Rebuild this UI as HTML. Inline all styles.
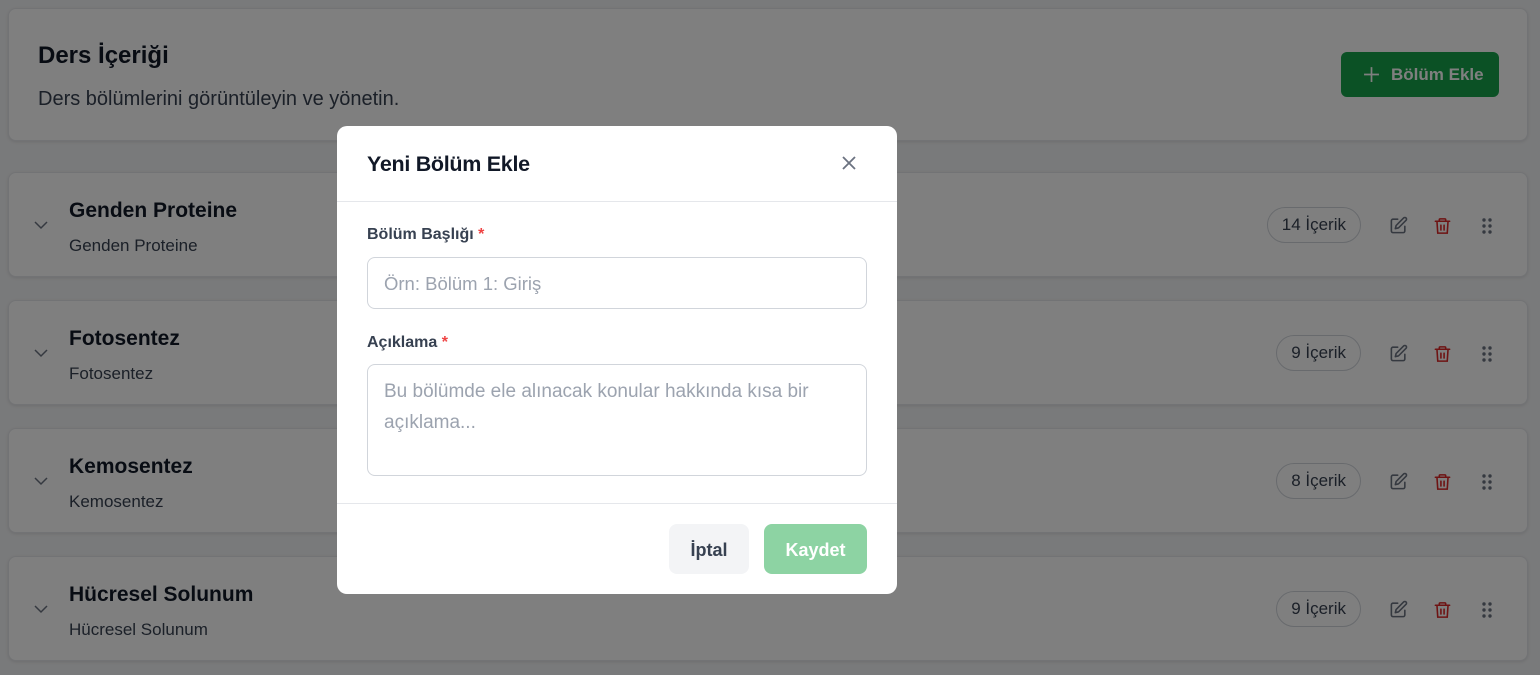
<!DOCTYPE html>
<html><head><meta charset="utf-8"><style>
*{box-sizing:border-box;margin:0;padding:0}
body{width:1540px;height:675px;overflow:hidden;background:#f3f4f6;font-family:"Liberation Sans",sans-serif;position:relative}
.card{position:absolute;left:8px;width:1520px;background:#fff;border:1px solid #e5e7eb;border-radius:8px;box-shadow:0 1px 3px rgba(0,0,0,.1)}
.abs{position:absolute}
.sec h3{position:absolute;left:60px;top:26px;font-size:21px;font-weight:bold;color:#111827}
.sec p{position:absolute;left:60px;top:63px;font-size:17px;color:#374151}
.chev{position:absolute;left:24px;top:44px}
.pill{position:absolute;right:166px;top:34px;height:36px;border:1px solid #d1d5db;border-radius:18px;font-size:17px;color:#374151;line-height:34px;padding:0 14px}
.ic{position:absolute;top:43px}
.ov{position:absolute;inset:0;background:rgba(0,0,0,.5)}
.modal{position:absolute;left:337px;top:126px;width:560px;height:468px;background:#fff;border-radius:10px}
.lbl{position:absolute;left:30px;font-size:16px;font-weight:bold;color:#374151}
.lbl span{color:#ef4444}
.inp{position:absolute;left:30px;width:500px;border:1px solid #d1d5db;border-radius:8px;color:#9ca3af;font-size:18.5px;padding-left:16px}
</style></head><body>
<div class="card" style="top:8px;height:133px">
 <div class="abs" style="left:29px;top:33px;font-size:24px;font-weight:bold;color:#111827">Ders İçeriği</div>
 <div class="abs" style="left:29px;top:79px;font-size:20px;color:#374151">Ders bölümlerini görüntüleyin ve yönetin.</div>
 <div class="abs" style="left:1332px;top:43px;width:158px;height:45px;background:#16a34a;border-radius:6px;color:#fff;font-size:17px;font-weight:bold;line-height:45px;padding-left:50px">Bölüm Ekle
  <svg class="abs" style="left:22px;top:14px" width="17" height="17" viewBox="0 0 16 16" stroke="#fff" stroke-width="1.6"><path d="M8 1v14M1 8h14"/></svg></div>
</div>
<div id="cards"></div>
<script>
var d=[["Genden Proteine",172,"14 İçerik"],["Fotosentez",300,"9 İçerik"],["Kemosentez",428,"8 İçerik"],["Hücresel Solunum",556,"9 İçerik"]],h="";
d.forEach(function(c){h+='<div class="card sec" style="top:'+c[1]+'px;height:105px"><svg class="chev" width="16" height="16" viewBox="0 0 16 16" fill="none" stroke="#6b7280" stroke-width="1.5"><path d="M2 5l6 6 6-6"/></svg><h3>'+c[0]+'</h3><p>'+c[0]+'</p><div class="pill">'+c[2]+'</div>'+
'<svg class="ic" style="left:1380px" width="19" height="19" viewBox="0 0 24 24" fill="none" stroke="#6b7280" stroke-width="2" stroke-linecap="round" stroke-linejoin="round"><path d="M11 4H5a2 2 0 0 0-2 2v13a2 2 0 0 0 2 2h13a2 2 0 0 0 2-2v-6"/><path d="M18.5 2.5a2.1 2.1 0 0 1 3 3L12 15l-4 1 1-4z"/></svg>'+
'<svg class="ic" style="left:1424px" width="19" height="20" viewBox="0 0 24 24" fill="none" stroke="#dc2626" stroke-width="2" stroke-linecap="round"><path d="M3 6h18M8 6V4a1 1 0 0 1 1-1h6a1 1 0 0 1 1 1v2M5 6l1 15h12l1-15M10 11v6M14 11v6"/></svg>'+
'<svg class="ic" style="left:1472px;top:44px" width="12" height="18" viewBox="0 0 12 18" fill="#6b7280"><circle cx="3" cy="3" r="1.7"/><circle cx="9" cy="3" r="1.7"/><circle cx="3" cy="9" r="1.7"/><circle cx="9" cy="9" r="1.7"/><circle cx="3" cy="15" r="1.7"/><circle cx="9" cy="15" r="1.7"/></svg></div>';});
document.getElementById('cards').innerHTML=h;
</script>
<div class="ov"></div>
<div class="modal">
 <div class="abs" style="left:30px;top:26px;font-size:21.5px;color:#111827;font-weight:bold;letter-spacing:-0.3px">Yeni Bölüm Ekle</div>
 <svg class="abs" style="left:504px;top:29px" width="16" height="16" viewBox="0 0 16 16" stroke="#6b7280" stroke-width="1.8"><path d="M2 2l12 12M14 2L2 14"/></svg>
 <div class="abs" style="left:0;top:75px;width:560px;height:1px;background:#e5e7eb"></div>
 <div class="lbl" style="top:100px">Bölüm Başlığı <span>*</span></div>
 <div class="inp" style="top:131px;height:52px;line-height:52px">Örn: Bölüm 1: Giriş</div>
 <div class="lbl" style="top:208px">Açıklama <span>*</span></div>
 <div class="inp" style="top:238px;height:112px;padding-top:11px;line-height:31px;padding-right:16px;font-size:19px">Bu bölümde ele alınacak konular hakkında kısa bir açıklama...</div>
 <div class="abs" style="left:0;top:377px;width:560px;height:1px;background:#e5e7eb"></div>
 <div class="abs" style="left:332px;top:398px;width:80px;height:50px;background:#f3f4f6;border-radius:8px;text-align:center;line-height:52px;font-size:18px;font-weight:bold;color:#374151">İptal</div>
 <div class="abs" style="left:427px;top:398px;width:103px;height:50px;background:#8dd3a3;border-radius:8px;text-align:center;line-height:52px;font-size:18px;font-weight:bold;color:#fff">Kaydet</div>
</div>
</body></html>
